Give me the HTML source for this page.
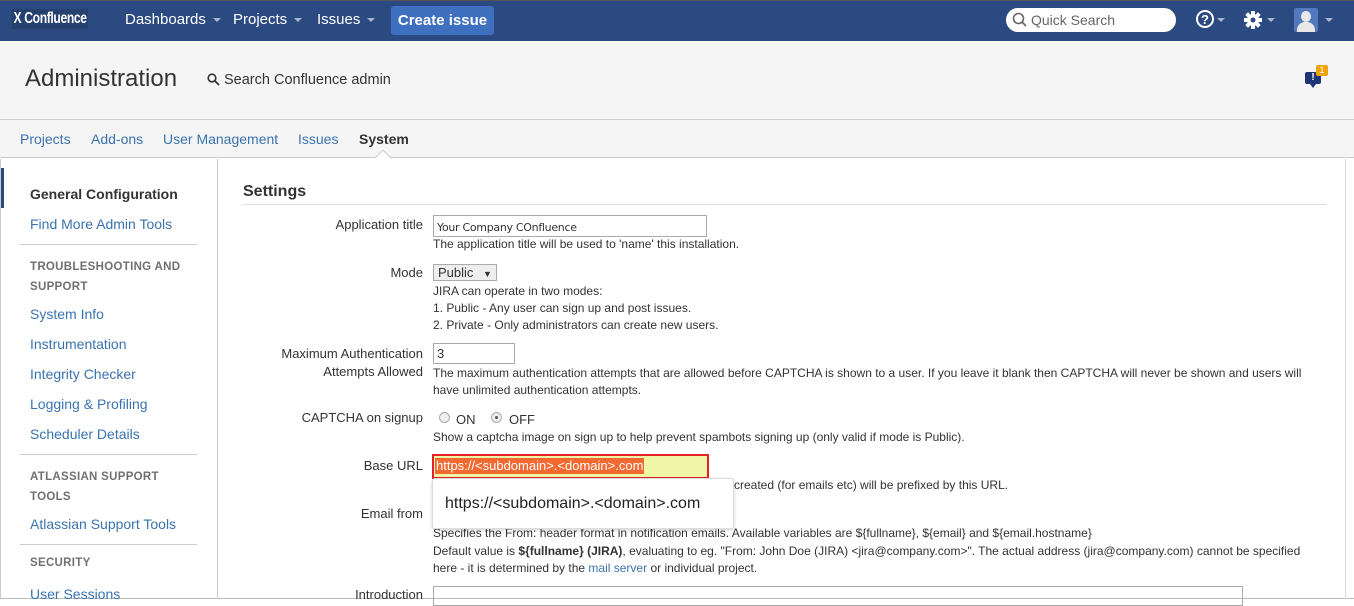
<!DOCTYPE html>
<html><head><meta charset="utf-8"><style>
*{margin:0;padding:0;box-sizing:border-box}
body{width:1354px;height:604px;overflow:hidden;background:#fff;font-family:"Liberation Sans",Arial,sans-serif;color:#333;position:relative}
.a{position:absolute;white-space:nowrap}
.nav{left:0;top:0;width:1354px;height:41px;background:#2c4a82;border-top:1px solid #555}
.nt{color:#fff;font-size:15px;top:11px}
.caret{display:inline-block;width:0;height:0;border-left:4px solid transparent;border-right:4px solid transparent;border-top:4px solid #aab5cc;margin-left:7px;vertical-align:middle}
.link{color:#3b73af}
.side{font-size:14px;color:#3b73af}
.sh{font-size:11.5px;font-weight:bold;color:#707070;letter-spacing:.3px}
.hr{height:1px;background:#ccc}
.lab{font-size:13px;color:#333;text-align:right;right:931px}
.d{font-size:12px;color:#333;left:433px}
</style></head><body>
<div class="a nav"></div>
<div class="a" style="left:12px;top:9px;color:#fff;font-size:16px;font-weight:bold;letter-spacing:-.5px;background:#264070;padding:1px 2px;transform:scaleX(.76);transform-origin:0 0">X Confluence</div>
<div class="a nt" style="left:125px">Dashboards<span class="caret"></span></div>
<div class="a nt" style="left:233px">Projects<span class="caret"></span></div>
<div class="a nt" style="left:317px">Issues<span class="caret"></span></div>
<div class="a" style="left:391px;top:6px;width:103px;height:29px;background:#3f6fbf;border-radius:3px;color:#fff;font-weight:bold;font-size:15px;text-align:center;line-height:29px">Create issue</div>
<div class="a" style="left:1006px;top:8px;width:170px;height:24px;background:#fff;border-radius:12px"></div>
<svg class="a" style="left:1012px;top:12px" width="16" height="16"><circle cx="6.5" cy="6.5" r="5" fill="none" stroke="#666" stroke-width="1.6"/><line x1="10" y1="10" x2="14" y2="14" stroke="#666" stroke-width="1.8"/></svg>
<div class="a" style="left:1031px;top:12px;color:#666;font-size:14px">Quick Search</div>
<svg class="a" style="left:1195px;top:9px" width="22" height="22"><circle cx="10" cy="10" r="8" fill="none" stroke="#fff" stroke-width="2"/><text x="10" y="15" text-anchor="middle" fill="#fff" font-size="13" font-weight="bold" font-family="Liberation Sans">?</text></svg>
<span class="a caret" style="left:1210px;top:18px"></span>
<svg class="a" style="left:1243px;top:10px" width="20" height="20" viewBox="0 0 20 20"><g fill="#fff"><circle cx="10" cy="10" r="6"/><rect x="8" y="1" width="4" height="18"/><rect x="1" y="8" width="18" height="4"/><rect x="8" y="1" width="4" height="18" transform="rotate(45 10 10)"/><rect x="8" y="1" width="4" height="18" transform="rotate(-45 10 10)"/></g><circle cx="10" cy="10" r="2.5" fill="#2c4a82"/></svg>
<span class="a caret" style="left:1260px;top:18px"></span>
<div class="a" style="left:1294px;top:8px;width:24px;height:24px;background:#5279bd;border-radius:2px;overflow:hidden"><div class="a" style="left:7px;top:3px;width:10px;height:11px;border-radius:50%;background:#e8e8e8"></div><div class="a" style="left:3px;top:14px;width:18px;height:12px;border-radius:8px 8px 0 0;background:#e8e8e8"></div></div>
<span class="a caret" style="left:1318px;top:18px"></span>

<div class="a" style="left:0;top:41px;width:1354px;height:79px;background:#f5f5f5;border-bottom:1px solid #ccc"></div>
<div class="a" style="left:0;top:120px;width:1354px;height:38px;background:#f5f5f5;border-bottom:1px solid #ccc"></div>
<div class="a" style="left:25px;top:65px;font-size:24px;color:#333">Administration</div>
<svg class="a" style="left:207px;top:73px" width="13" height="13"><circle cx="5" cy="5" r="3.8" fill="none" stroke="#333" stroke-width="1.6"/><line x1="8" y1="8" x2="12" y2="12" stroke="#333" stroke-width="1.8"/></svg>
<div class="a" style="left:224px;top:72px;font-size:14.5px">Search Confluence admin</div>
<div class="a" style="left:1305px;top:72px;width:16px;height:12px;background:#1f3576;border-radius:2px;color:#fff;font-size:10px;font-weight:bold;text-align:center;line-height:12px">!</div>
<div class="a" style="left:1310px;top:84px;width:0;height:0;border-left:3px solid transparent;border-right:3px solid transparent;border-top:4px solid #1f3576"></div>
<div class="a" style="left:1316px;top:65px;width:12px;height:11px;background:#f0a30a;border-radius:2px;color:#fff;font-size:9px;text-align:center;line-height:11px">1</div>

<div class="a link" style="left:20px;top:131px;font-size:14px">Projects</div>
<div class="a link" style="left:91px;top:131px;font-size:14px">Add-ons</div>
<div class="a link" style="left:163px;top:131px;font-size:14px">User Management</div>
<div class="a link" style="left:298px;top:131px;font-size:14px">Issues</div>
<div class="a" style="left:359px;top:131px;font-size:14px;font-weight:bold">System</div>
<div class="a" style="left:377px;top:152px;width:12px;height:12px;background:#fff;border-left:1px solid #ccc;border-top:1px solid #ccc;transform:rotate(45deg)"></div>

<div class="a" style="left:0;top:168px;width:4px;height:40px;background:#2c4a82"></div>
<div class="a" style="left:0;top:159px;width:1px;height:440px;background:#ccc"></div>
<div class="a" style="left:217px;top:159px;width:1px;height:440px;background:#ccc"></div>
<div class="a" style="left:0;top:598px;width:1354px;height:1px;background:#bbb"></div>
<div class="a" style="left:1345px;top:159px;width:1px;height:440px;background:#ddd"></div>

<div class="a" style="left:30px;top:186px;font-size:14px;font-weight:bold">General Configuration</div>
<div class="a side" style="left:30px;top:216px">Find More Admin Tools</div>
<div class="a hr" style="left:20px;top:244px;width:177px"></div>
<div class="a sh" style="left:30px;top:257px;line-height:20px">TROUBLESHOOTING AND<br>SUPPORT</div>
<div class="a side" style="left:30px;top:306px">System Info</div>
<div class="a side" style="left:30px;top:336px">Instrumentation</div>
<div class="a side" style="left:30px;top:366px">Integrity Checker</div>
<div class="a side" style="left:30px;top:396px">Logging &amp; Profiling</div>
<div class="a side" style="left:30px;top:426px">Scheduler Details</div>
<div class="a hr" style="left:20px;top:454px;width:177px"></div>
<div class="a sh" style="left:30px;top:467px;line-height:20px">ATLASSIAN SUPPORT<br>TOOLS</div>
<div class="a side" style="left:30px;top:516px">Atlassian Support Tools</div>
<div class="a hr" style="left:20px;top:544px;width:177px"></div>
<div class="a sh" style="left:30px;top:557px">SECURITY</div>
<div class="a side" style="left:30px;top:586px">User Sessions</div>

<div class="a" style="left:243px;top:183px;font-size:16px;font-weight:bold">Settings</div>
<div class="a hr" style="left:243px;top:204px;width:1083px;background:#ddd"></div>

<div class="a lab" style="top:217px">Application title</div>
<div class="a" style="left:433px;top:215px;width:274px;height:22px;border:1px solid #aaa;font-size:11px;padding:5px 3px;font-family:'DejaVu Sans',sans-serif;letter-spacing:-.3px">Your Company COnfluence</div>
<div class="a d" style="top:237px">The application title will be used to 'name' this installation.</div>

<div class="a lab" style="top:265px">Mode</div>
<div class="a" style="left:433px;top:264px;width:64px;height:17px;border:1px solid #aaa;background:#eee;font-size:13px;padding:0 4px;line-height:15px">Public <span style="font-size:9px;margin-left:6px">▼</span></div>
<div class="a d" style="top:283px;line-height:17px">JIRA can operate in two modes:<br>1. Public - Any user can sign up and post issues.<br>2. Private - Only administrators can create new users.</div>

<div class="a lab" style="top:345px;line-height:18px">Maximum Authentication<br>Attempts Allowed</div>
<div class="a" style="left:433px;top:343px;width:82px;height:21px;border:1px solid #aaa;font-size:13px;padding:2px 3px">3</div>
<div class="a d" style="top:365px;line-height:17px">The maximum authentication attempts that are allowed before CAPTCHA is shown to a user. If you leave it blank then CAPTCHA will never be shown and users will<br>have unlimited authentication attempts.</div>

<div class="a lab" style="top:410px">CAPTCHA on signup</div>
<div class="a" style="left:439px;top:412px;width:11px;height:11px;border-radius:50%;border:1px solid #aaa;background:#eee"></div>
<div class="a" style="left:456px;top:412px;font-size:13px">ON</div>
<div class="a" style="left:491px;top:412px;width:11px;height:11px;border-radius:50%;border:1px solid #aaa;background:#eee"><div class="a" style="left:3px;top:3px;width:3px;height:3px;border-radius:50%;background:#555"></div></div>
<div class="a" style="left:509px;top:412px;font-size:13px">OFF</div>
<div class="a d" style="top:430px">Show a captcha image on sign up to help prevent spambots signing up (only valid if mode is Public).</div>

<div class="a lab" style="top:458px">Base URL</div>
<div class="a" style="left:432px;top:454px;width:277px;height:25px;border:2px solid #e4202a;background:#f0f8a8"></div>
<div class="a" style="left:435px;top:458px;height:16px;background:#f26a32;color:#fff;font-size:13px;padding:0 1px;line-height:16px">https://&lt;subdomain&gt;.&lt;domain&gt;.com</div>
<div class="a d" style="left:734px;top:478px">created (for emails etc) will be prefixed by this URL.</div>

<div class="a lab" style="top:506px">Email from</div>
<div class="a d" style="top:526px">Specifies the From: header format in notification emails. Available variables are ${fullname}, ${email} and ${email.hostname}</div>
<div class="a" style="left:432px;top:478px;width:302px;height:51px;background:#fff;border:1px solid #ddd;border-radius:3px;box-shadow:0 1px 3px rgba(0,0,0,.2)"></div>
<div class="a" style="left:445px;top:495px;font-size:16px;color:#222">https://&lt;subdomain&gt;.&lt;domain&gt;.com</div>
<div class="a d" style="top:543px;line-height:17px">Default value is <b>${fullname} (JIRA)</b>, evaluating to eg. "From: John Doe (JIRA) &lt;jira@company.com&gt;". The actual address (jira@company.com) cannot be specified<br>here - it is determined by the <span class="link">mail server</span> or individual project.</div>

<div class="a lab" style="top:587px">Introduction</div>
<div class="a" style="left:433px;top:586px;width:810px;height:20px;border:1px solid #aaa"></div>
</body></html>
